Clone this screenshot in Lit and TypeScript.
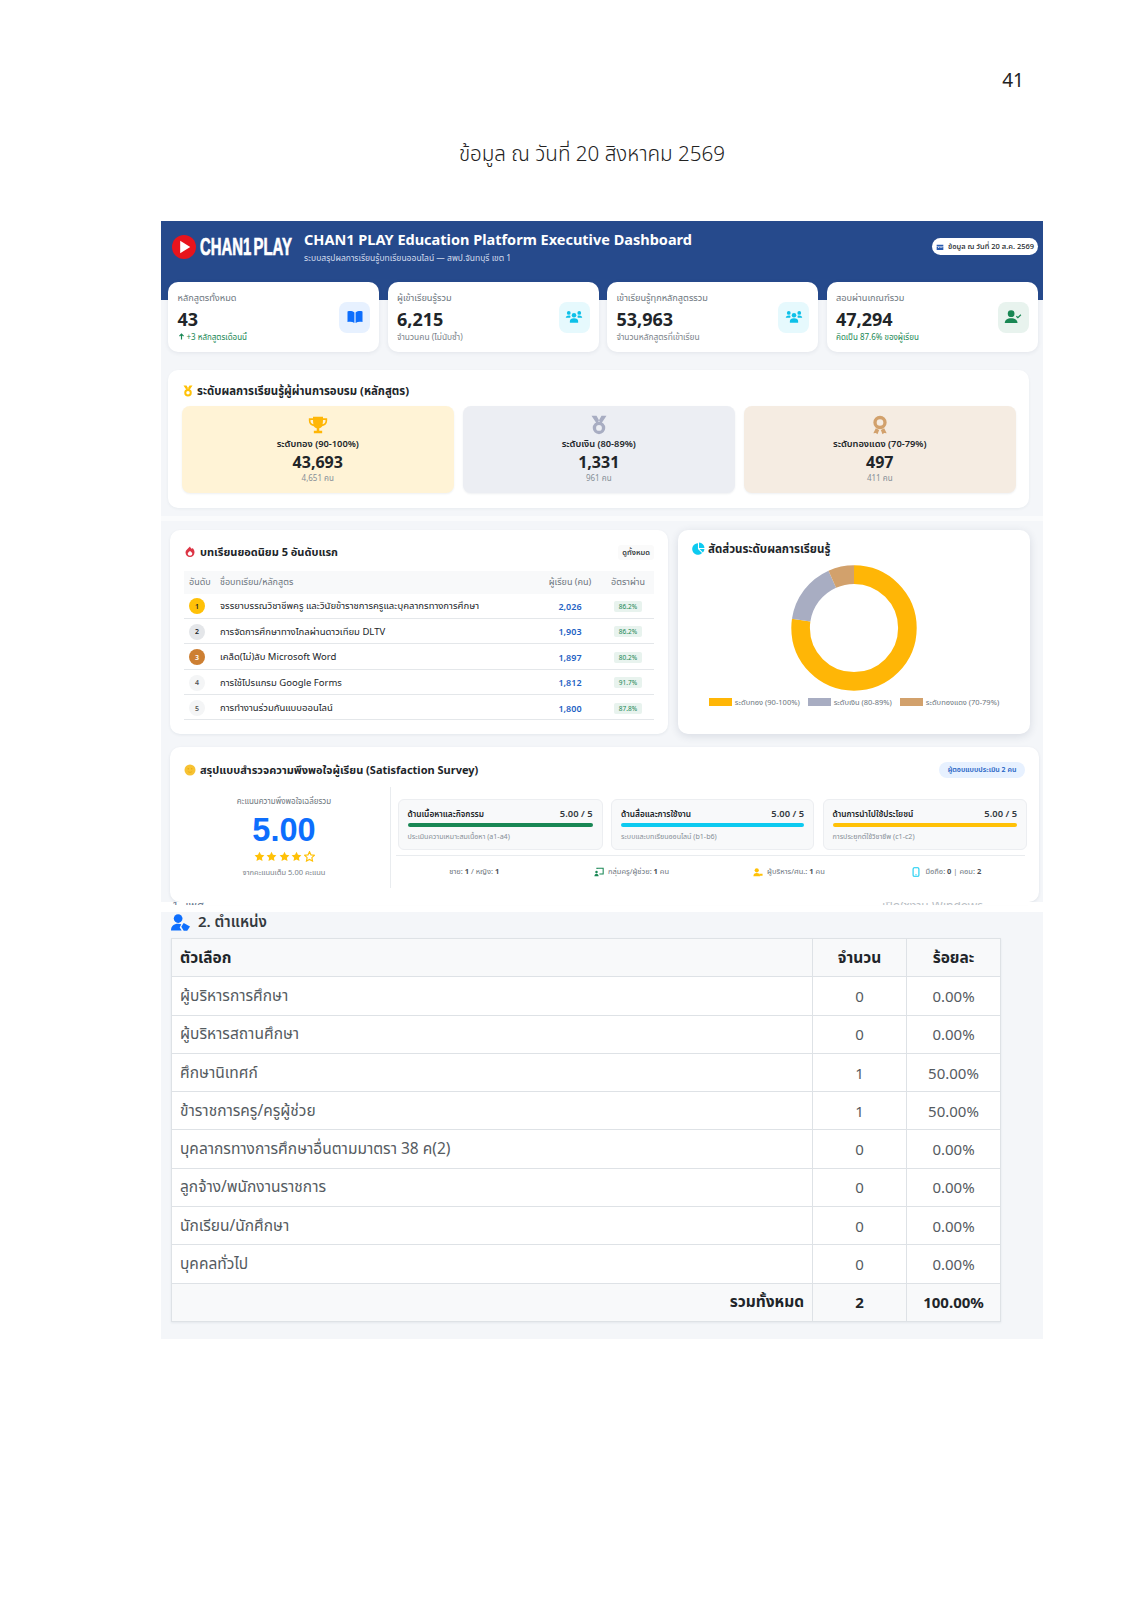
import { LitElement, html, css, svg } from "lit";
import { customElement } from "lit/decorators.js";

const icons: Record<string, any> = {
  book: svg`<path fill="currentColor" d="M2 4.500c3.400-.8 6.600-.5 9.200 1.400V20c-2.600-1.700-5.800-2-9.200-1.200zM22 4.500c-3.400-.8-6.600-.5-9.200 1.400V20c2.600-1.700 5.800-2 9.200-1.200z"/>`,
  users: svg`<g fill="currentColor"><circle cx="12" cy="9.500" r="3"/><circle cx="5" cy="6.500" r="2.500"/><circle cx="19" cy="6.500" r="2.500"/><path d="M6.500 19.500v-2.200c0-2.400 2-3.800 5.500-3.800s5.500 1.400 5.500 3.800v2.200z"/><path d="M1 13.500c0-2 1.500-3.500 4-3.500 1 0 1.800.2 2.400.6-.4.800-.5 1.700-.3 2.400H1zM23 13.500c0-2-1.500-3.500-4-3.500-1 0-1.800.2-2.400.6.4.800.5 1.700.3 2.400H23z"/></g>`,
  check: svg`<g fill="currentColor"><circle cx="9.500" cy="7.500" r="4.500"/><path d="M1 20c0-4 3.500-6.500 8.500-6.500S18 16 18 20z"/></g><path d="M16.500 11l2 2 4-4" fill="none" stroke="currentColor" stroke-width="1.600"/>`,
  trophy: svg`<path fill="currentColor" d="M6 2h12v2h5v3c0 3.500-2.500 6-6 6.500-.8 1.200-2 2-3.500 2.300V19H17v3H7v-3h3.500v-3.200C9 15.500 7.800 14.700 7 13.500 3.500 13 1 10.500 1 7V4h5zM3 6v1c0 2 1.200 3.600 3.500 4.200C6.200 9.800 6 8 6 6zm18 0h-3c0 2-.2 3.800-.5 5.200C19.800 10.600 21 9 21 7z"/>`,
  medal: svg`<path fill="currentColor" d="M3 1h6l4 7-4 2zM21 1h-6l-4 7 4 2z"/><circle cx="12" cy="15.500" r="5.500" fill="none" stroke="currentColor" stroke-width="4"/>`,
  award: svg`<circle cx="12" cy="9" r="6" fill="none" stroke="currentColor" stroke-width="4"/><path fill="currentColor" d="M7 16l-3 6 3-.5 2 1.500 2-5zM17 16l3 6-3-.5-2 1.500-2-5z"/>`,
  fire: svg`<path fill="currentColor" fill-rule="evenodd" d="M12 1c1 3 2.500 3.500 4 5 0-1 .5-1.500 1-2 2 2 4 5 4 8.500C21 18 17 22 12 22s-9-4-9-9.500C3 8 8 5.500 12 1zm0 9c-3 2-4.500 3.500-4.500 5.500 0 2.300 2 4 4.500 4s4.500-1.700 4.500-4c0-2-1.500-3.500-4.500-5.500z"/>`,
  pie: svg`<path fill="currentColor" d="M11 2.500V13l7.500 7.200A10.500 10.500 0 1 1 11 2.500z"/><path fill="currentColor" d="M13 1a10 10 0 0 1 10 10H13zM14 13h9a10 10 0 0 1-3 6.500z"/>`,
  smile: svg`<circle cx="12" cy="12" r="11" fill="currentColor"/><circle cx="8.500" cy="9.500" r="1.300" fill="#e8a90a"/><circle cx="15.500" cy="9.500" r="1.300" fill="#e8a90a"/><path d="M7.500 14.500c2.500 3 6.500 3 9 0" fill="none" stroke="#e8a90a" stroke-width="1.500"/>`,
  board: svg`<path d="M7 5V3h15v14H13" fill="none" stroke="currentColor" stroke-width="2.500"/><circle cx="6" cy="12" r="3" fill="currentColor"/><path fill="currentColor" d="M1 22c0-4 2-6 5-6s5 2 5 6z"/>`,
  tie: svg`<circle cx="9" cy="8" r="5" fill="currentColor"/><path fill="currentColor" d="M1 22c0-5 3-7.500 8-7.500s8 2.500 8 7.500z"/><path fill="currentColor" d="M15 16h8v5h-6z"/>`,
  mobile: svg`<rect x="5" y="2" width="14" height="20" rx="2.500" fill="none" stroke="currentColor" stroke-width="2.500"/><rect x="10" y="18" width="4" height="1.500" fill="currentColor"/>`,
  calendar: svg`<path fill="currentColor" d="M2 5h20v4H2zM2 10.500h20V21H2z"/><path fill="#fff" d="M6 13h3v2H6zM11 13h3v2h-3zM16 13h3v2h-3z"/>`,
  person: svg`<circle cx="9" cy="7" r="5.500" fill="currentColor"/><path fill="currentColor" d="M0 22c0-5.500 3.500-8.500 9-8.500 1.500 0 3 .3 4 .8l-2 4 2.500 3.700z"/><path fill="currentColor" d="M16 12.500l8 4.500-3.500 5.500H16l-3-5z"/>`,
  up: svg`<path d="M12 22V4M5 11l7-7 7 7" fill="none" stroke="currentColor" stroke-width="4"/>`,
};

const icon = (name: string, cls = "") =>
  html`<svg class="ic ${cls}" viewBox="0 0 24 24" aria-hidden="true">${icons[name]}</svg>`;

const starPath = "M12 1.500l3.200 6.900 7.500.9-5.500 5.200 1.400 7.400L12 18.300l-6.600 3.600 1.400-7.400L1.300 9.300l7.500-.9z";

const stats = [
  { label: "หลักสูตรทั้งหมด", value: "43", sub: "+3 หลักสูตรเดือนนี้", subCls: "green", up: true, ic: "book", icCls: "blue" },
  { label: "ผู้เข้าเรียนรู้รวม", value: "6,215", sub: "จำนวนคน (ไม่นับซ้ำ)", subCls: "", up: false, ic: "users", icCls: "cyan" },
  { label: "เข้าเรียนรู้ทุกหลักสูตรรวม", value: "53,963", sub: "จำนวนหลักสูตรที่เข้าเรียน", subCls: "", up: false, ic: "users", icCls: "cyan" },
  { label: "สอบผ่านเกณฑ์รวม", value: "47,294", sub: "คิดเป็น 87.6% ของผู้เรียน", subCls: "green", up: false, ic: "check", icCls: "grn" },
];

const levels = [
  { key: "gold", ic: "trophy", label: "ระดับทอง (90-100%)", value: "43,693", people: 4651, color: "#ffb606" },
  { key: "silver", ic: "medal", label: "ระดับเงิน (80-89%)", value: "1,331", people: 961, color: "#a8adc2" },
  { key: "bronze", ic: "award", label: "ระดับทองแดง (70-79%)", value: "497", people: 411, color: "#d2a16c" },
];

const lessons = [
  { name: "จรรยาบรรณวิชาชีพครู และวินัยข้าราชการครูและบุคลากรทางการศึกษา", n: "2,026", rate: "86.2%" },
  { name: "การจัดการศึกษาทางไกลผ่านดาวเทียม DLTV", n: "1,903", rate: "86.2%" },
  { name: "เคล็ด(ไม่)ลับ Microsoft Word", n: "1,897", rate: "80.2%" },
  { name: "การใช้โปรแกรม Google Forms", n: "1,812", rate: "91.7%" },
  { name: "การทำงานร่วมกันแบบออนไลน์", n: "1,800", rate: "87.8%" },
];

const survey = [
  { t: "ด้านเนื้อหาและกิจกรรม", note: "ประเมินความเหมาะสมเนื้อหา (a1-a4)", color: "#198754" },
  { t: "ด้านสื่อและการใช้งาน", note: "ระบบและบทเรียนออนไลน์ (b1-b6)", color: "#0dcaf0" },
  { t: "ด้านการนำไปใช้ประโยชน์", note: "การประยุกต์ใช้วิชาชีพ (c1-c2)", color: "#ffc107" },
];

const roles = [
  ["ผู้บริหารการศึกษา", "0", "0.00%"],
  ["ผู้บริหารสถานศึกษา", "0", "0.00%"],
  ["ศึกษานิเทศก์", "1", "50.00%"],
  ["ข้าราชการครู/ครูผู้ช่วย", "1", "50.00%"],
  ["บุคลากรทางการศึกษาอื่นตามมาตรา 38 ค(2)", "0", "0.00%"],
  ["ลูกจ้าง/พนักงานราชการ", "0", "0.00%"],
  ["นักเรียน/นักศึกษา", "0", "0.00%"],
  ["บุคคลทั่วไป", "0", "0.00%"],
];

@customElement("app-root")
export class AppRoot extends LitElement {
  static styles = css`
    :host {
      display: block;
      width: 1131px;
      height: 1600px;
      background: #fff;
      overflow: hidden;
      font-family: "Noto Sans", "Noto Sans Thai", "Open Sans", sans-serif;
      color: #212529;
    }
    .ic { display: block; width: 1em; height: 1em; flex: none; }
    .pageno {
      padding: 67px 107px 0 0;
      height: 27px;
      text-align: right;
      font-size: 19px;
      line-height: 27px;
      color: #222;
    }
    .doctitle {
      margin-top: 41px;
      height: 36px;
      padding-left: 53px;
      text-align: center;
      font-size: 20.600px;
      line-height: 36px;
      font-weight: 300;
      color: #222;
    }
    .dash { margin: 50px 0 0 161px; width: 882px; }
    .sec1 { background: #f4f6f9; height: 295px; }
    .hero {
      background: #264a8c;
      height: 79px;
      display: flex;
      align-items: flex-start;
      padding: 8px 5px 0 11px;
      box-sizing: border-box;
      color: #fff;
    }
    .logo { display: flex; align-items: center; gap: 4px; width: 132px; flex: none; height: 34px; margin-top: 1px; }
    .logo svg { flex: none; }
    .logotext {
      display: block;
      width: 91px;
      flex: none;
      font-family: "Liberation Sans Narrow", "Liberation Sans", sans-serif;
      font-weight: 700;
      font-size: 24px;
      line-height: 34px;
      white-space: nowrap;
      word-spacing: -3px;
      -webkit-text-stroke: 0.7px #fff;
      transform: scaleX(0.62);
      transform-origin: left center;
    }
    .herotext { flex: 1; }
    .herotext h1 { margin: 0; font-size: 14.500px; line-height: 20px; font-weight: 700; white-space: nowrap; }
    .herotext p { margin: 2px 0 0; font-size: 8.500px; line-height: 14px; color: #d3dcec; white-space: nowrap; }
    .pill {
      margin-top: 9px;
      width: 106px;
      height: 17px;
      border-radius: 9px;
      background: #fff;
      color: #212529;
      display: flex;
      align-items: center;
      justify-content: center;
      gap: 4px;
      font-size: 7.500px;
      font-weight: 500;
      white-space: nowrap;
    }
    .pill .ic { color: #2a5bb0; font-size: 8px; }
    .stats {
      display: grid;
      grid-template-columns: repeat(4, 211px);
      column-gap: 8.500px;
      margin: -18px 0 0 7px;
    }
    .stat {
      height: 70px;
      background: #fff;
      border-radius: 10px;
      box-shadow: 0 1px 4px rgba(40, 60, 90, 0.09);
      display: flex;
      align-items: center;
      justify-content: space-between;
      padding: 0 9px 0 9.500px;
      box-sizing: border-box;
    }
    .stat .lbl { font-size: 9.200px; line-height: 13px; margin-bottom: 3px; color: #6c757d; white-space: nowrap; }
    .stat .val { font-size: 18px; line-height: 25px; font-weight: 700; color: #212529; }
    .stat .sub { font-size: 8.400px; line-height: 12px; margin-top: -1.500px; color: #7b838a; display: flex; align-items: center; gap: 2px; white-space: nowrap; }
    .stat .sub.green { color: #198754; font-size: 8px; }
    .stat .sub .ic { font-size: 7px; }
    .sicon {
      width: 31px;
      height: 31px;
      border-radius: 8px;
      display: flex;
      align-items: center;
      justify-content: center;
      font-size: 18px;
    }
    .sicon.blue { background: #e7f1ff; color: #0d6efd; }
    .sicon.cyan { background: #e6f9fd; color: #0dc0e8; }
    .sicon.grn { background: #e8f3ee; color: #198754; }

    .levelpanel {
      margin: 18px 0 0 7px;
      width: 861px;
      height: 138px;
      background: #fff;
      border-radius: 10px;
      box-shadow: 0 1px 3px rgba(40, 60, 90, 0.06);
      box-sizing: border-box;
      padding: 12px 14px 0;
    }
    .ptitle { display: flex; align-items: center; gap: 5px; font-size: 11px; font-weight: 700; line-height: 18px; white-space: nowrap; color: #212529; }
    .ptitle .ic { font-size: 12px; }
    .levelpanel .ptitle { font-size: 11.400px; gap: 3px; }
    .levelpanel .ptitle > span { color: #ffc107; }
    .levels { display: grid; grid-template-columns: repeat(3, 271.500px); column-gap: 9.500px; margin-top: 6px; }
    .level {
      height: 87px;
      border-radius: 8px;
      display: flex;
      flex-direction: column;
      align-items: center;
      box-sizing: border-box;
      padding-top: 9px;
      box-shadow: 0 1px 2px rgba(40, 60, 90, 0.08);
    }
    .level .ic { font-size: 20px; }
    .level .l { font-size: 9.300px; font-weight: 600; line-height: 14px; margin-top: 2px; white-space: nowrap; }
    .level .v { font-size: 16px; font-weight: 700; line-height: 22px; margin-top: 0; }
    .level .p { font-size: 8px; line-height: 12px; color: #868e96; margin-top: -1px; }
    .level.gold { background: #fff3d6; } .level.gold .ic { color: #ffb606; }
    .level.silver { background: #eceef3; } .level.silver .ic { color: #a8adc2; }
    .level.bronze { background: #f5ece2; } .level.bronze .ic { color: #d2a16c; }

    .band { height: 5px; background: #fafbfc; }
    .sec2 { background: #f4f6f9; height: 381px; box-sizing: border-box; padding: 8.500px 0 0 9px; }
    .tworow { display: flex; gap: 10px; align-items: flex-start; }
    .toppanel {
      width: 498px;
      height: 204px;
      background: #fff;
      border-radius: 10px;
      box-shadow: 0 1px 3px rgba(40, 60, 90, 0.08);
      box-sizing: border-box;
      padding: 13.500px 14px 0;
    }
    .tophead { display: flex; align-items: center; justify-content: space-between; height: 18px; }
    .tophead .ptitle { gap: 4px; }
    .tophead .ptitle .ic { color: #dc3545; font-size: 12px; }
    .viewall { height: 15px; line-height: 15px; padding: 0 4px; background: #fafafa; border-radius: 3px; font-size: 7.500px; font-weight: 600; color: #343a40; white-space: nowrap; }
    .trow {
      display: grid;
      grid-template-columns: 36px 319px 62px 54px;
      align-items: center;
      height: 25.400px;
      padding-top: 1.500px;
      border-bottom: 1px solid #e4e7ea;
      box-sizing: border-box;
      font-size: 9.500px;
      color: #212529;
    }
    .trow.head { height: 23px; padding-top: 0; margin-top: 9.500px; background: #f8f9fa; color: #6c757d; border-bottom: none; font-size: 9px; }
    .trow.head > :nth-child(1) { padding-left: 5px; }
    .trow .c { text-align: center; white-space: nowrap; }
    .trow .nm { white-space: nowrap; }
    .trow .n { color: #1e62c4; font-weight: 600; text-align: center; font-size: 9px; }
    .rank { width: 16px; height: 16px; border-radius: 50%; margin-left: 5px; font-size: 7px; font-weight: 600; display: flex; align-items: center; justify-content: center; }
    .r1 { background: #ffc107; } .r2 { background: #e4e6e9; } .r3 { background: #cd7f32; color: #fff; } .r4, .r5 { background: #f4f5f6; color: #555; }
    .rate { justify-self: center; width: 28px; height: 11px; line-height: 11px; text-align: center; background: #e8f3ee; color: #198754; font-size: 6.500px; border-radius: 2px; }

    .chartpanel {
      width: 352px;
      height: 204px;
      background: #fff;
      border-radius: 10px;
      box-shadow: 0 2px 8px rgba(40, 60, 90, 0.14);
      box-sizing: border-box;
      padding: 10px 14px 0 14px;
      display: flex;
      flex-direction: column;
      align-items: center;
    }
    .chartpanel .ptitle { align-self: flex-start; font-size: 11.500px; gap: 3px; }
    .chartpanel .ptitle .ic { color: #0dcaf0; font-size: 13px; }
    .donut { width: 126px; height: 126px; margin-top: 7px; display: block; }
    .legend { display: flex; gap: 8px; margin-top: 5px; font-size: 7.500px; color: #6c757d; line-height: 12px; white-space: nowrap; }
    .legend span.it { display: flex; align-items: center; gap: 3px; }
    .legend i { display: block; width: 23px; height: 8px; }

    .survey {
      margin-top: 13px;
      width: 869px;
      height: 155px;
      background: #fff;
      border-radius: 10px;
      box-shadow: 0 1px 3px rgba(40, 60, 90, 0.1);
      box-sizing: border-box;
      padding: 14px 14px 0;
    }
    .shead { display: flex; align-items: center; justify-content: space-between; height: 18px; }
    .shead .ptitle .ic { color: #f7c233; font-size: 12px; }
    .shead .ptitle { gap: 4px; }
    .badge { width: 86px; height: 16px; line-height: 16px; border-radius: 8px; background: #e7f1ff; color: #1e62c4; font-size: 7px; font-weight: 600; text-align: center; white-space: nowrap; }
    .sbody { display: flex; margin: 8px 0 0 -14px; }
    .score { width: 221px; height: 101px; border-right: 1px solid #e9ecef; box-sizing: border-box; display: flex; flex-direction: column; align-items: center; padding-top: 8px; padding-left: 8px; }
    .score .a { font-size: 8px; line-height: 12px; color: #6c757d; white-space: nowrap; }
    .score .big { font-family: "Liberation Sans", sans-serif; font-size: 32.500px; line-height: 36px; font-weight: 700; color: #0d6efd; margin-top: 5.500px; }
    .stars { display: flex; gap: 1.500px; margin-top: 3px; height: 11px; }
    .stars svg { width: 11px; height: 11px; display: block; }
    .score .b { font-size: 7.500px; line-height: 12px; color: #7b838a; margin-top: 3.500px; white-space: nowrap; }
    .sright { flex: 1; padding: 12px 0 0 6.500px; min-width: 0; }
    .aspects { display: grid; grid-template-columns: 205px 203px 204.500px; column-gap: 8.500px; }
    .aspect { height: 51px; background: #f8f9fa; border: 1px solid #eceef1; border-radius: 6px; box-sizing: border-box; padding: 8px 9px 0 9px; }
    .aspect .top { display: flex; justify-content: space-between; align-items: center; font-size: 8.300px; font-weight: 600; line-height: 12px; white-space: nowrap; }
    .aspect .top b { font-size: 9.400px; font-weight: 600; color: #343a40; }
    .bar { height: 4.500px; border-radius: 3px; margin-top: 3px; }
    .aspect .note { font-size: 7.100px; line-height: 11px; color: #868e96; margin-top: 4px; white-space: nowrap; }
    .foot {
      display: grid;
      grid-template-columns: repeat(4, 1fr);
      margin-top: 5px;
      margin-left: -2px;
      border-top: 1px solid #e9ecef;
      height: 32px;
      align-items: center;
      font-size: 7.500px;
      color: #6c757d;
      white-space: nowrap;
    }
    .fi { display: flex; align-items: center; justify-content: center; gap: 4px; }
    .foot b { font-weight: 700; color: #495057; }
    .foot .ic { font-size: 10px; }
    .fi.grn { --c: #198754; } .fi.yel { --c: #ffc107; } .fi.cy { --c: #0dcaf0; }
    .fi .ic { color: var(--c); }
    .peek { height: 3px; overflow: hidden; display: flex; justify-content: space-between; padding: 0 60px 0 11px; font-size: 12px; line-height: 8px; color: #6a7a90; background: #fff; }
    .peek .wm { color: #b9bec4; }
    .gap { height: 7px; }
    .sec3 { background: #f4f6f9; height: 427px; box-sizing: border-box; padding: 0 0 0 10px; }
    .sec3 h2 { margin: 0; display: flex; align-items: center; gap: 8px; height: 26px; box-sizing: border-box; padding-bottom: 5px; font-size: 15px; font-weight: 600; color: #343a40; white-space: nowrap; }
    .sec3 h2 .ic { color: #0d6efd; font-size: 19px; }
    table {
      width: 829px;
      border-collapse: collapse;
      table-layout: fixed;
      background: #fff;
      font-size: 15.500px;
      color: #555b61;
      box-shadow: 0 1px 2px rgba(40, 60, 90, 0.08);
    }
    th, td { border: 1px solid #dee2e6; height: 38.300px; padding: 0 8px; box-sizing: border-box; white-space: nowrap; }
    th { text-align: left; color: #212529; font-weight: 700; background: #f8f9fa; }
    th.ctr, td.ctr { text-align: center; }
    td.ctr { font-size: 15px; }
    tr.total td { background: #f8f9fa; color: #212529; font-weight: 700; }
    tr.total td.r { text-align: right; }
  `;

  private donut() {
    const total = levels.reduce((s, l) => s + l.people, 0);
    const r = 53.4;
    const circ = 2 * Math.PI * r;
    let acc = 0;
    return html`<svg class="donut" viewBox="0 0 126 126">
      ${levels.map((l) => {
        const len = (l.people / total) * circ;
        const seg = svg`<circle cx="63" cy="63" r="${r}" fill="none" stroke="${l.color}" stroke-width="18.600"
          stroke-dasharray="${len} ${circ - len}" stroke-dashoffset="${-acc}" transform="rotate(-90 63 63)"/>`;
        acc += len;
        return seg;
      })}
    </svg>`;
  }

  render() {
    return html`
      <div class="pageno">41</div>
      <div class="doctitle">ข้อมูล ณ วันที่ 20 สิงหาคม 2569</div>
      <div class="dash">
        <section class="sec1">
          <header class="hero">
            <div class="logo">
              <svg width="24" height="24" viewBox="0 0 25 25" aria-hidden="true">
                <circle cx="12.500" cy="12.500" r="12.500" fill="#e8141c"/>
                <path d="M8.500 6l10.500 6.500L8.500 19z" fill="#fff"/>
              </svg>
              <span class="logotext">CHAN1 PLAY</span>
            </div>
            <div class="herotext">
              <h1>CHAN1 PLAY Education Platform Executive Dashboard</h1>
              <p>ระบบสรุปผลการเรียนรู้บทเรียนออนไลน์ — สพป.จันทบุรี เขต 1</p>
            </div>
            <div class="pill">${icon("calendar")}ข้อมูล ณ วันที่ 20 ส.ค. 2569</div>
          </header>
          <div class="stats">
            ${stats.map(
              (s) => html`<div class="stat">
                <div>
                  <div class="lbl">${s.label}</div>
                  <div class="val">${s.value}</div>
                  <div class="sub ${s.subCls}">${s.up ? icon("up") : ""}${s.sub}</div>
                </div>
                <div class="sicon ${s.icCls}">${icon(s.ic)}</div>
              </div>`
            )}
          </div>
          <div class="levelpanel">
            <div class="ptitle"><span>${icon("medal")}</span>ระดับผลการเรียนรู้ผู้ผ่านการอบรม (หลักสูตร)</div>
            <div class="levels">
              ${levels.map(
                (l) => html`<div class="level ${l.key}">
                  ${icon(l.ic)}
                  <div class="l">${l.label}</div>
                  <div class="v">${l.value}</div>
                  <div class="p">${l.people.toLocaleString("en-US")} คน</div>
                </div>`
              )}
            </div>
          </div>
        </section>
        <div class="band"></div>
        <section class="sec2">
          <div class="tworow">
            <div class="toppanel">
              <div class="tophead">
                <div class="ptitle">${icon("fire")}บทเรียนยอดนิยม 5 อันดับแรก</div>
                <div class="viewall">ดูทั้งหมด</div>
              </div>
              <div class="trow head">
                <div>อันดับ</div><div class="nm">ชื่อบทเรียน/หลักสูตร</div><div class="c">ผู้เรียน (คน)</div><div class="c">อัตราผ่าน</div>
              </div>
              ${lessons.map(
                (l, i) => html`<div class="trow">
                  <div class="rank r${i + 1}">${i + 1}</div>
                  <div class="nm">${l.name}</div>
                  <div class="n">${l.n}</div>
                  <div class="rate">${l.rate}</div>
                </div>`
              )}
            </div>
            <div class="chartpanel">
              <div class="ptitle">${icon("pie")}สัดส่วนระดับผลการเรียนรู้</div>
              ${this.donut()}
              <div class="legend">
                ${levels.map(
                  (l) => html`<span class="it"><i style="background:${l.color}"></i>${l.label}</span>`
                )}
              </div>
            </div>
          </div>
          <div class="survey">
            <div class="shead">
              <div class="ptitle">${icon("smile")}สรุปแบบสำรวจความพึงพอใจผู้เรียน (Satisfaction Survey)</div>
              <div class="badge">ผู้ตอบแบบประเมิน 2 คน</div>
            </div>
            <div class="sbody">
              <div class="score">
                <div class="a">คะแนนความพึงพอใจเฉลี่ยรวม</div>
                <div class="big">5.00</div>
                <div class="stars">
                  ${[0, 1, 2, 3].map(
                    () => html`<svg viewBox="0 0 24 24"><path d="${starPath}" fill="#ffc107"/></svg>`
                  )}
                  <svg viewBox="0 0 24 24"><path d="${starPath}" fill="none" stroke="#ffc107" stroke-width="2.500"/></svg>
                </div>
                <div class="b">จากคะแนนเต็ม 5.00 คะแนน</div>
              </div>
              <div class="sright">
                <div class="aspects">
                  ${survey.map(
                    (a) => html`<div class="aspect">
                      <div class="top"><span>${a.t}</span><b>5.00 / 5</b></div>
                      <div class="bar" style="background:${a.color}"></div>
                      <div class="note">${a.note}</div>
                    </div>`
                  )}
                </div>
                <div class="foot">
                  <div class="fi"><span>ชาย: <b>1</b> / หญิง: <b>1</b></span></div>
                  <div class="fi grn">${icon("board")}<span>กลุ่มครู/ผู้ช่วย: <b>1</b> คน</span></div>
                  <div class="fi yel">${icon("tie")}<span>ผู้บริหาร/ศน.: <b>1</b> คน</span></div>
                  <div class="fi cy">${icon("mobile")}<span>มือถือ: <b>0</b> | คอม: <b>2</b></span></div>
                </div>
              </div>
            </div>
          </div>
        </section>
        <div class="peek"><span>1. เพศ</span><span class="wm">เปิดใช้งาน Windows</span></div>
        <div class="gap"></div>
        <section class="sec3">
          <h2>${icon("person")}2. ตำแหน่ง</h2>
          <table>
            <colgroup><col style="width:641px" /><col style="width:94px" /><col style="width:94px" /></colgroup>
            <thead><tr><th>ตัวเลือก</th><th class="ctr">จำนวน</th><th class="ctr">ร้อยละ</th></tr></thead>
            <tbody>
              ${roles.map(
                (r) => html`<tr><td>${r[0]}</td><td class="ctr">${r[1]}</td><td class="ctr">${r[2]}</td></tr>`
              )}
              <tr class="total"><td class="r">รวมทั้งหมด</td><td class="ctr">2</td><td class="ctr">100.00%</td></tr>
            </tbody>
          </table>
        </section>
      </div>
    `;
  }
}
